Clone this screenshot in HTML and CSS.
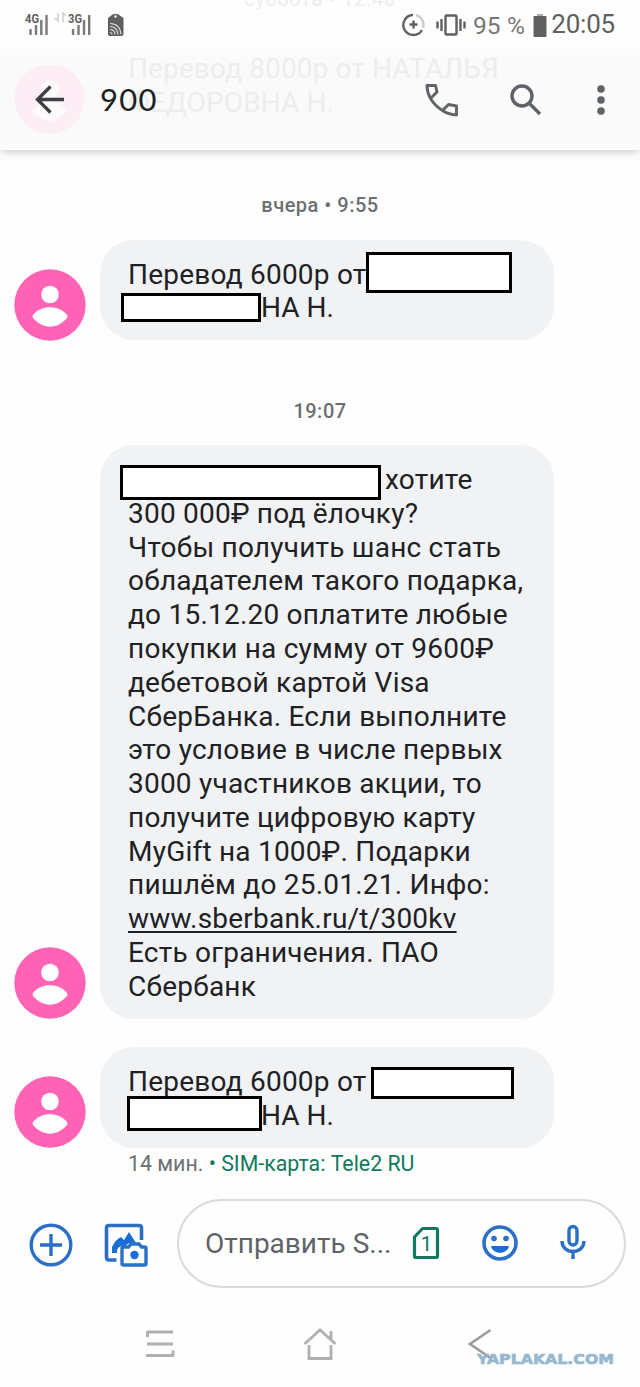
FILE: index.html
```html
<!DOCTYPE html>
<html lang="ru">
<head>
<meta charset="utf-8">
<title>900</title>
<link rel="stylesheet" href="styles.css">
</head>
<body>
<main class="phone">
  <header class="top">
    <div class="ghost ghost-date">суббота • 12:48</div>
    <div class="ghost ghost-text">Перевод 8000р от НАТАЛЬЯ<br>ФЕДОРОВНА Н.</div>
    <div class="status">
      <svg class="signals" width="104" height="28" viewBox="0 0 104 28">
        <g font-family="Roboto" font-weight="700" font-size="13.500" fill="#606060">
          <text x="1" y="11.500" textLength="14" lengthAdjust="spacingAndGlyphs">4G</text><text x="44" y="11.500" textLength="14" lengthAdjust="spacingAndGlyphs">3G</text>
        </g>
        <g stroke="#7a7a7a" stroke-width="2.400">
          <path d="M6.500 18v6M12 14v10M17.300 9v15M22.500 4v20M49 18v6M54.500 14v10M60 9v15M65.200 4v20"/>
        </g>
        <path d="M34 2v8l-3-3M39 11V2l3 3" fill="none" stroke="#d0d0d0" stroke-width="1.600"/>
        <path d="M84 7l4.500-3.500q3-1.500 6 0L99.500 7v16q0 2-2 2H86q-2 0-2-2z" fill="#5f5f5f"/>
        <circle cx="91.500" cy="5.500" r="1.200" fill="#fff"/>
        <path d="M86 12.500q10 0 11 11M86 15.500q7 0 8 8M86 18.500q4.500 0 5 5M86 21.500q2 0 2 2" fill="none" stroke="#ddd" stroke-width="1.100"/>
      </svg>
      <div class="status-right">
        <svg width="24" height="24" viewBox="0 0 24 24" fill="none" stroke="#606060" stroke-width="2.400">
          <path d="M11 2a10 10 0 1 0 9 15"/><path d="M14 2.200A10 10 0 0 1 21 15" stroke="#ccc"/><path d="M11.500 7.500v8M7.500 11.500h8"/>
        </svg>
        <svg class="vibrate" width="30" height="22" viewBox="0 0 30 22" fill="none" stroke="#606060" stroke-width="2.400">
          <rect x="9.500" y="1.500" width="11" height="19" rx="1"/><path d="M1.500 7.500v7M5.500 5v12M28.500 7.500v7M24.500 5v12"/>
        </svg>
        <span class="percent">95 %</span>
        <svg class="battery" width="14" height="24" viewBox="0 0 14 24"><path d="M4 1h6v3H4z" fill="#aaa"/><rect x=".5" y="3" width="13" height="21" rx="1" fill="#606060"/></svg>
        <span class="clock">20:05</span>
      </div>
    </div>
    <div class="appbar">
      <div class="back">
        <svg width="71" height="70" viewBox="0 0 71 70"><circle cx="35.500" cy="34" r="35" fill="#fdeef6"/><circle cx="36" cy="24" r="9" fill="#fcfafb"/><path d="M18 46q18-20 35 0q-17 20-35 0z" fill="#fcfafb"/><path d="M50 34.500H24M36.500 21.500l-13 13 13 13" fill="none" stroke="#3c4043" stroke-width="3.300"/></svg>
      </div>
      <h1 class="title">900</h1>
      <div class="actions">
        <svg width="33" height="33" viewBox="0 0 33 33" fill="none" stroke="#5f6368" stroke-width="2.900" stroke-linejoin="round"><path d="M2 1.500h8.500l1.500 6.500-6.500 6.500C3 10 2 6 2 1.500zM5.500 14.500q4.500 7.500 12 12l6-6 8 1.500v9q-8-.5-14-4.500"/></svg>
        <svg width="32" height="32" viewBox="0 0 32 32" fill="none" stroke="#5f6368" stroke-width="3.400"><circle cx="12" cy="12" r="10"/><path d="M19 19l11 11"/></svg>
        <svg class="more" width="8" height="30" viewBox="0 0 8 30" fill="#5f6368"><circle cx="4" cy="4" r="3.800"/><circle cx="4" cy="15" r="3.800"/><circle cx="4" cy="26" r="3.800"/></svg>
      </div>
    </div>
  </header>

  <section class="thread">
    <time class="stamp stamp-first">вчера • 9:55</time>
    <article class="message">
      <svg class="avatar" viewBox="0 0 72 72"><circle cx="36" cy="36" r="35.700" fill="#ff63b5"/><circle cx="36" cy="25.500" r="8.800" fill="#fff"/><path d="M19 46C27 35.500 45 35.500 53 46Q54 47.500 53 49C43 60.500 29 60.500 19 49Q18 47.500 19 46z" fill="#fff"/></svg>
      <div class="bubble">Перевод 6000р от<br><span class="after-box">НА Н.</span>
        <i class="box box-a"></i><i class="box box-b"></i>
      </div>
    </article>
    <time class="stamp stamp-second">19:07</time>
    <article class="message">
      <svg class="avatar" viewBox="0 0 72 72"><circle cx="36" cy="36" r="35.700" fill="#ff63b5"/><circle cx="36" cy="25.500" r="8.800" fill="#fff"/><path d="M19 46C27 35.500 45 35.500 53 46Q54 47.500 53 49C43 60.500 29 60.500 19 49Q18 47.500 19 46z" fill="#fff"/></svg>
      <div class="bubble"><span class="after-name">хотите</span><br>300 000₽ под ёлочку?<br>Чтобы получить шанс стать<br>обладателем такого подарка,<br>до 15.12.20 оплатите любые<br>покупки на сумму от 9600₽<br>дебетовой картой Visa<br>СберБанка. Если выполните<br>это условие в числе первых<br>3000 участников акции, то<br>получите цифровую карту<br>MyGift на 1000₽. Подарки<br>пишлём до 25.01.21. Инфо:<br><a class="link">www.sberbank.ru/t/300kv</a><br>Есть ограничения. ПАО<br>Сбербанк
        <i class="box box-c"></i>
      </div>
    </article>
    <article class="message message-last">
      <svg class="avatar" viewBox="0 0 72 72"><circle cx="36" cy="36" r="35.700" fill="#ff63b5"/><circle cx="36" cy="25.500" r="8.800" fill="#fff"/><path d="M19 46C27 35.500 45 35.500 53 46Q54 47.500 53 49C43 60.500 29 60.500 19 49Q18 47.500 19 46z" fill="#fff"/></svg>
      <div class="bubble">Перевод 6000р от<br><span class="after-box">НА Н.</span>
        <i class="box box-d"></i><i class="box box-e"></i>
      </div>
    </article>
    <div class="meta">14 мин. <span class="sim">• SIM-карта: Tele2 RU</span></div>
  </section>

  <footer class="composer">
    <svg class="plus" width="44" height="44" viewBox="0 0 44 44" fill="none" stroke="#2b6fc6" stroke-width="3.400"><circle cx="22" cy="22" r="19.800"/><path d="M22 11v22M11 22h22"/></svg>
    <svg class="gallery" width="44" height="44" viewBox="0 0 44 44"><path d="M12.500 37H5q-2.500 0-2.500-2.500V5Q2.500 2.500 5 2.500h30Q37.500 2.500 37.500 5v12" fill="none" stroke="#2b6fc6" stroke-width="3.600"/><path d="M8 30v-6q4-8 9-10l3 3 5-8 7 11h-7l-4 3h-4q-3 1-4 4v3z" fill="#1a6cd6"/><path d="M19.500 24h5l2.500-3h8l2.500 3h3q1.500 0 1.500 1.500v15q0 1.500-1.500 1.500h-21q-1.500 0-1.500-1.500v-15q0-1.500 1.500-1.500z" fill="#fff" stroke="#2b6fc6" stroke-width="3.400"/><circle cx="30.500" cy="32" r="4.200" fill="#1a6cd6"/></svg>
    <div class="field">
      <span class="placeholder">Отправить S...</span>
      <svg class="simcard" width="28" height="34" viewBox="0 0 28 34"><path d="M10.500 2.500H24q1.500 0 1.500 1.500v26q0 1.500-1.500 1.500H4q-1.500 0-1.500-1.500V11z" fill="none" stroke="#12795f" stroke-width="3.200" stroke-linejoin="round"/><text x="8.500" y="24.500" font-family="Roboto" font-size="21" fill="#12795f">1</text></svg>
      <svg class="smile" width="36" height="36" viewBox="0 0 36 36"><circle cx="18" cy="18" r="16" fill="none" stroke="#2b6fc6" stroke-width="3.600"/><circle cx="12" cy="13.500" r="2.800" fill="#2b6fc6"/><circle cx="24" cy="13.500" r="2.800" fill="#2b6fc6"/><path d="M9 21h18c-1.500 9-16.500 9-18 0z" fill="#1a6cd6"/></svg>
      <svg class="mic" width="26" height="36" viewBox="0 0 26 36" fill="none" stroke="#2b6fc6" stroke-width="3.400"><rect x="9" y="2.500" width="8" height="18.500" rx="4"/><path d="M2 17c0 14 22 14 22 0M13 27.500V35"/></svg>
    </div>
  </footer>
  <nav class="navbar">
    <svg width="30" height="30" viewBox="0 0 30 30" fill="none" stroke="#b0b0b0" stroke-width="3" stroke-linejoin="round"><path d="M2.500 8V3H28M2 15h26M1 26.500h27v-5"/></svg>
    <svg width="34" height="34" viewBox="0 0 34 34" fill="none" stroke="#b0b0b0" stroke-width="2.800"><path d="M1.500 17L17 3l15.500 14M28 12V4M6 18v13.500h22V18"/></svg>
    <svg width="24" height="32" viewBox="0 0 24 32" fill="none" stroke="#9c9c9c" stroke-width="2.600"><path d="M22.500 2L2 16l20.500 14"/></svg>
    <svg class="watermark" width="140" height="16" viewBox="0 0 140 16"><text x="1" y="12.500" textLength="137" lengthAdjust="spacingAndGlyphs">YAPLAKAL.COM</text></svg>
  </nav>
</main>
</body>
</html>
```
FILE: styles.css
```css
body { margin: 0; background: #fefefe; font-family: Roboto, "Noto Sans", sans-serif; color: #202124; }
.phone { width: 640px; height: 1387px; display: flex; flex-direction: column; overflow: hidden; position: relative; }
svg { display: block; flex: none; }

.top { height: 150px; flex: none; position: relative; background: linear-gradient(#fefefe 40px, #fafafa 65px); box-shadow: 0 1px 10px rgba(0,0,0,.24); }
.ghost { position: absolute; white-space: nowrap; color: #ededed; }
.ghost-date { left: 244px; top: -13px; font-size: 20px; line-height: 24px; letter-spacing: .8px; }
.ghost-text { left: 128px; top: 52px; font-size: 28px; line-height: 33.750px; letter-spacing: .12px; }
.status { height: 50px; display: flex; justify-content: space-between; padding: 0 25px 0 24px; position: relative; }
.signals { margin-top: 11px; }
.status-right { display: flex; align-items: center; color: #606060; }
.vibrate { margin-left: 10px; }
.percent { margin-left: 7px; font-size: 24.500px; letter-spacing: .2px; color: #777; padding-top: 1px; }
.battery { margin-left: 8px; }
.clock { margin-left: 4px; font-size: 26px; letter-spacing: -.2px; margin-top: -2px; }
.appbar { height: 100px; display: flex; align-items: center; padding: 0 35px 0 14px; position: relative; }
.title { margin: -2px 0 0 15px; font: 400 31px/36px Lato, sans-serif; letter-spacing: 1.300px; color: #202124; }
.actions { margin-left: auto; display: flex; align-items: center; gap: 52px; }
.more { margin-left: 3px; }

.thread { height: 1042px; flex: none; display: flex; flex-direction: column; }
.stamp { text-align: center; font-size: 20px; line-height: 24px; font-weight: 500; letter-spacing: .5px; color: #6c6f72; }
.stamp-first { margin: 43px 0 22.500px; }
.stamp-second { margin: 58.500px 0 22.500px; }
.message { display: flex; align-items: flex-end; gap: 14px; padding-left: 14px; }
.message-last { margin-top: 28.500px; }
.avatar { width: 72px; height: 72px; margin-bottom: -.8px; }
.bubble { position: relative; box-sizing: border-box; width: 454px; padding: 18px 28px 15px; border-radius: 34px; background: #f1f2f4; font-size: 28px; line-height: 33.780px; letter-spacing: .22px; white-space: nowrap; }
.after-box { margin-left: 133px; letter-spacing: 0; }
.after-name { margin-left: 257px; }
.link { text-decoration: underline; text-decoration-thickness: 1.500px; text-underline-offset: 3px; }
.box { position: absolute; box-sizing: border-box; background: #fff; border: 3px solid #000; }
.box-a { left: 266px; top: 12px; width: 146px; height: 41px; }
.box-b { left: 21px; top: 53px; width: 140px; height: 29px; }
.box-c { left: 20px; top: 20px; width: 261px; height: 35px; }
.box-d { left: 271px; top: 20px; width: 143px; height: 32px; }
.box-e { left: 27px; top: 49px; width: 135px; height: 35px; }
.meta { margin: 3.500px 0 0 128px; font-size: 21.350px; line-height: 26px; color: #6c6f72; white-space: nowrap; }
.sim { color: #12795f; }

.composer { height: 102px; flex: none; display: flex; align-items: center; padding: 0 14px 0 29px; }
.plus { margin-top: 3px; }
.gallery { margin: 3px 0 0 31px; }
.field { flex: 1; box-sizing: border-box; height: 89px; margin-left: 29px; display: flex; align-items: center; padding-left: 26px; border: 2px solid #dadada; border-radius: 45px; }
.placeholder { font-size: 28px; color: #5f6368; width: 207px; white-space: nowrap; }
.smile { margin-left: 42px; }
.mic { margin-left: 42px; margin-top: -2px; }

.navbar { flex: 1; position: relative; display: flex; align-items: center; padding: 7px 0 0 145px; }
.navbar svg:nth-child(2) { margin-left: 128px; }
.navbar svg:nth-child(3) { margin-left: 131px; }
.navbar .watermark { position: absolute; left: 476px; top: 57px; opacity: .9; }
.watermark text { font: 700 14.500px "DejaVu Sans", sans-serif; fill: #8db1ca; stroke: #8db1ca; stroke-width: .7px; }
```
